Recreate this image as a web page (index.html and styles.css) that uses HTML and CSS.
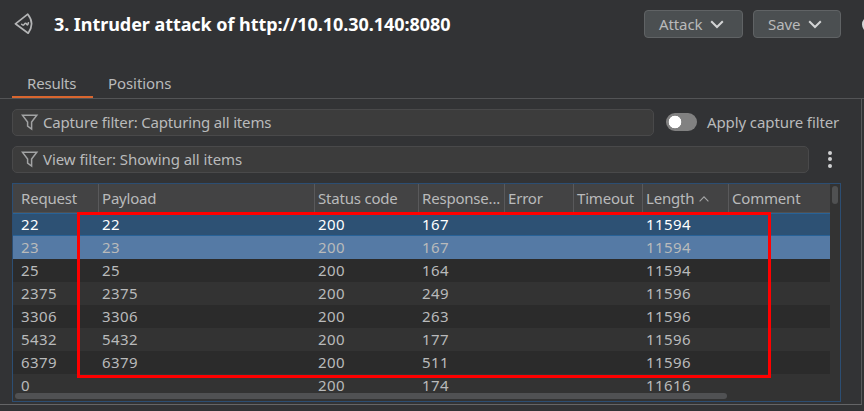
FILE: index.html
```html
<!DOCTYPE html>
<html lang="en">
<head>
<meta charset="utf-8">
<title>Intruder attack</title>
<link rel="stylesheet" href="styles.css">
</head>
<body>
<header class="top">
  <svg class="logo" width="20" height="24" viewBox="0 0 20 24" fill="none" stroke="#b4b5b6" stroke-width="1.7" stroke-linejoin="round" stroke-linecap="round"><path d="M1.4 11.8 13.8 2.2Q21.2 11.5 14.2 21.2Z"/><path d="M7.7 12.3Q9.3 14 10.4 12.2T12.7 12.2 14.4 10.7" stroke-width="1.6"/></svg>
  <h1 class="title">3. Intruder attack of http://10.10.30.140:8080</h1>
  <button class="btn attack"><span>Attack</span><svg width="14" height="9" viewBox="0 0 14 9"><path d="M1.2 1.2 7 7 12.8 1.2"/></svg></button>
  <button class="btn save"><span>Save</span><svg width="14" height="9" viewBox="0 0 14 9"><path d="M1.2 1.2 7 7 12.8 1.2"/></svg></button>
  <span class="help"></span>
</header>
<nav class="tabs">
  <span class="tab active">Results</span><span class="tab second">Positions</span>
</nav>
<main class="panel">
  <div class="line">
    <div class="filter"><svg width="18" height="17" viewBox="0 0 18 17"><path d="M1.4 1.2H15.8L10.6 8V15L6.6 12.2V8Z"/></svg><span class="capture">Capture filter: Capturing all items</span></div>
    <span class="switch"></span>
    <span class="apply">Apply capture filter</span>
  </div>
  <div class="line">
    <div class="filter view"><svg width="18" height="17" viewBox="0 0 18 17"><path d="M1.4 1.2H15.8L10.6 8V15L6.6 12.2V8Z"/></svg><span class="viewtext">View filter: Showing all items</span></div>
    <span class="dots"><i></i><i></i><i></i></span>
  </div>
  <section class="results">
    <div class="viewport">
      <div class="row head"><span>Request</span><span>Payload</span><span>Status code</span><span>Response...</span><span>Error</span><span>Timeout</span><span>Length<svg class="sort" width="10" height="6" viewBox="0 0 10 6"><path d="M.6 5.4 5 .9 9.4 5.4"/></svg></span><span>Comment</span></div>
      <div class="row current"><span>22</span><span>22</span><span>200</span><span>167</span><span></span><span></span><span>11594</span><span></span></div>
      <div class="row hover"><span>23</span><span>23</span><span>200</span><span>167</span><span></span><span></span><span>11594</span><span></span></div>
      <div class="row dark"><span>25</span><span>25</span><span>200</span><span>164</span><span></span><span></span><span>11594</span><span></span></div>
      <div class="row"><span>2375</span><span>2375</span><span>200</span><span>249</span><span></span><span></span><span>11596</span><span></span></div>
      <div class="row dark"><span>3306</span><span>3306</span><span>200</span><span>263</span><span></span><span></span><span>11596</span><span></span></div>
      <div class="row"><span>5432</span><span>5432</span><span>200</span><span>177</span><span></span><span></span><span>11596</span><span></span></div>
      <div class="row dark"><span>6379</span><span>6379</span><span>200</span><span>511</span><span></span><span></span><span>11596</span><span></span></div>
      <div class="row"><span>0</span><span></span><span>200</span><span>174</span><span></span><span></span><span>11616</span><span></span></div>
    </div>
    <div class="vbar"></div>
    <div class="hbar"></div>
    <div class="marker"></div>
  </section>
</main>
</body>
</html>
```
FILE: styles.css
```css
* { box-sizing: border-box; }
body {
  margin: 0;
  width: 864px;
  height: 411px;
  overflow: hidden;
  background: #323335;
  color: #b9babb;
  font: 15px/20px "Noto Sans", sans-serif;
  white-space: nowrap;
}
.top { display: flex; align-items: center; height: 48px; padding-left: 14px; }
.logo { flex: none; }
.title { flex: none; width: 590px; margin: 0 0 0 20px; font-size: 18px; line-height: 24px; font-weight: 700; letter-spacing: -.06px; color: #fff; }
.btn {
  display: flex; align-items: center; flex: none; height: 28px; padding: 0 0 0 14px;
  border: 1px solid #606365; border-radius: 4px; background: #4b4f51; color: #b9babb;
  font: inherit; letter-spacing: -.1px;
}
.btn svg { fill: none; stroke: #d3d4d5; stroke-width: 2; margin-left: 8px; }
.attack { width: 99px; }
.save { width: 88px; margin-left: 10px; }
.help { flex: none; width: 17px; height: 17px; margin-left: 21px; border: 2px solid #d3d4d5; border-radius: 50%; }
.tabs { display: flex; height: 51px; padding: 25px 0 0 12px; border-bottom: 1px solid #535456; }
.tab { width: 81px; height: 25px; padding-left: 15px; }
.active { border-bottom: 2px solid #d9662f; letter-spacing: -.2px; }
.second { padding-left: 15px; letter-spacing: -.08px; }
.panel { width: 862px; height: 306px; padding: 10px 0 0 12px; border-right: 1px solid #58595b; border-bottom: 1px solid #646567; }
.line { display: flex; align-items: center; height: 27px; margin-bottom: 10px; }
.filter { display: flex; align-items: center; width: 642px; height: 27px; padding-left: 8px; border: 1px solid #49494a; border-radius: 5px; background: #3c3c3c; }
.filter svg { fill: none; stroke: #a2a3a4; stroke-width: 1.5; margin-right: 4px; }
.view { width: 797px; }
.capture, .viewtext, .apply { padding-bottom: 2px; }
.capture { letter-spacing: -.17px; }
.viewtext { letter-spacing: -.06px; }
.switch { width: 31px; height: 18px; margin: 0 0 1px 12px; border-radius: 9px; background: radial-gradient(circle at 9px 9px, #fff 6px, #818181 6.6px); }
.apply { margin-left: 10px; letter-spacing: -.1px; }
.dots { display: flex; flex-direction: column; gap: 2.5px; margin: 0 0 1px 19px; }
.dots i { width: 4px; height: 4px; border-radius: 50%; background: #d0d1d2; }
.results { position: relative; width: 829px; height: 219px; border: 1px solid #2c4e73; background: #333; }
.viewport { width: 817px; height: 213px; overflow: hidden; }
.row { display: grid; grid-template-columns: 85px 216px 104px 86px 69px 69px 86px 102px; height: 23px; line-height: 23px; letter-spacing: .42px; background: #333; }
.row span { padding-left: 4px; }
.row span:first-child { padding-left: 8px; }
.row.head { height: 29px; line-height: 29px; letter-spacing: -.2px; background: #434344; border-bottom: 1px solid #505153; }
.head span { border-left: 1px solid #59595b; padding-left: 3px; }
.head span:first-child { border: 0; }
.row.current { background: #2d5174; color: #fff; box-shadow: inset 0 1px #286297, inset 0 -1px #286297; }
.row.hover { background: #557aa5; }
.row.dark { background: #2b2b2b; }
.sort { fill: none; stroke: #a5a6a7; stroke-width: 1.1; margin: 0 0 2px 5px; }
.vbar { position: absolute; left: 819px; top: 2px; width: 6px; height: 18px; border-radius: 3px; background: #505152; }
.hbar { position: absolute; left: 2px; bottom: 2px; width: 712px; height: 6px; border-radius: 3px; background: #505153; }
.marker { position: absolute; left: 64px; top: 28px; width: 694px; height: 166px; border: 3px solid #f00; }
```
